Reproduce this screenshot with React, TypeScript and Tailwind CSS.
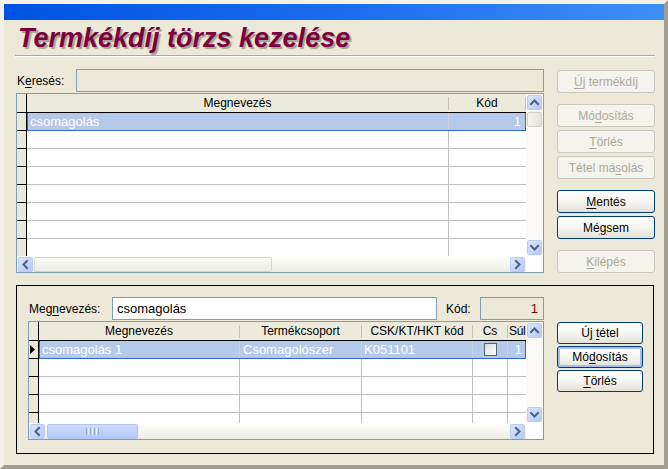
import React from 'react';

type Dir = 'up' | 'down' | 'left' | 'right';

function Chev({ dir }: { dir: Dir }) {
  const pts =
    dir === 'up'
      ? '3,8 6.5,4.5 10,8'
      : dir === 'down'
      ? '3,5 6.5,8.5 10,5'
      : dir === 'left'
      ? '8,3 4.5,6.5 8,10'
      : '5,3 8.5,6.5 5,10';
  return (
    <svg width="13" height="13" viewBox="0 0 13 13">
      <polyline points={pts} fill="none" stroke="#4D6185" strokeWidth="2" strokeLinecap="square" />
    </svg>
  );
}

function SB({ dir }: { dir: Dir }) {
  return (
    <div className="w-[15px] h-[15px] shrink-0 rounded-[2px] border border-[#BACCF3] bg-gradient-to-br from-[#DCE6FD] to-[#B4C8F6] flex items-center justify-center">
      <Chev dir={dir} />
    </div>
  );
}

function U({ children }: { children: React.ReactNode }) {
  return <span className="underline underline-offset-[2px] decoration-1">{children}</span>;
}

function Btn({
  children,
  disabled,
  focused,
  small,
}: {
  children: React.ReactNode;
  disabled?: boolean;
  focused?: boolean;
  small?: boolean;
}) {
  return (
    <div
      className={[
        small ? 'w-[86px] h-[22px]' : 'w-[98px] h-[23px]',
        'shrink-0 rounded-[3px] border flex items-center justify-center text-[12px] leading-none',
        disabled
          ? 'border-[#CAC8BB] bg-[#F4F3EE] text-[#ACA899]'
          : 'border-[#003C74] bg-gradient-to-b from-white via-[#F6F5F1] to-[#E3E1D8] text-black',
        focused ? 'shadow-[inset_0_0_0_2px_#A4BFEE]' : '',
      ].join(' ')}
    >
      <span>{children}</span>
    </div>
  );
}

function HSep() {
  return <span className="w-[1px] h-[13px] bg-[#C5C2B2] shrink-0" />;
}

function Grid1() {
  const rows = [0, 1, 2, 3, 4, 5, 6, 7];
  return (
    <div className="w-[528px] h-[180px] border border-[#7F9DB9] bg-white flex">
      <div className="w-[509px] flex flex-col">
        <div className="h-[18px] flex bg-[#EBEADB] text-[12px]">
          <div className="w-[10px] border-r border-black" />
          <div className="w-[422px] flex items-center">
            <span className="flex-1 text-center">Megnevezés</span>
            <HSep />
          </div>
          <div className="w-[77px] flex items-center">
            <span className="flex-1 text-center">Kód</span>
            <HSep />
          </div>
        </div>
        <div className="h-[1px] bg-black" />
        <div className="h-[143px] overflow-hidden flex flex-col">
          {rows.map((i) =>
            i === 0 ? (
              <div key={i} className="h-[18px] shrink-0 flex">
                <div className="w-[10px] bg-[#ECE9D8] border-r border-b border-black" />
                <div className="w-[499px] flex bg-[#B5C9EB] border-l border-r border-b border-[#316AC5] text-white text-[13px]">
                  <div className="w-[421px] border-r border-[#C8D2E4] flex items-center pl-[2px]">csomagolás</div>
                  <div className="w-[76px] flex items-center justify-end pr-[4px]">1</div>
                </div>
              </div>
            ) : (
              <div key={i} className="h-[18px] shrink-0 flex">
                <div className="w-[10px] bg-[#ECE9D8] border-r border-b border-black" />
                <div className="w-[422px] border-r border-b border-[#C0C0C0]" />
                <div className="w-[77px] border-b border-[#C0C0C0]" />
              </div>
            )
          )}
        </div>
        <div className="h-[16px] flex items-center bg-gradient-to-b from-[#FEFEFB] to-[#EEEDE5]">
          <div className="ml-[1px]">
            <SB dir="left" />
          </div>
          <div className="ml-[1px] w-[238px] h-[15px] rounded-[2px] border border-[#D8D6CA] bg-gradient-to-b from-[#FBFBF8] to-[#ECEBE3]" />
          <div className="flex-1" />
          <div className="mr-[1px]">
            <SB dir="right" />
          </div>
        </div>
      </div>
      <div className="w-[17px] flex flex-col">
        <div className="h-[162px] bg-[#FAF9F5] flex flex-col items-center">
          <div className="mt-[1px]">
            <SB dir="up" />
          </div>
          <div className="mt-[2px] w-[15px] h-[15px] rounded-[2px] border border-[#D2D0C4] bg-gradient-to-r from-[#F4F3EE] to-[#E6E5DC]" />
          <div className="flex-1" />
          <div className="mb-[1px]">
            <SB dir="down" />
          </div>
        </div>
        <div className="h-[16px] bg-white" />
      </div>
    </div>
  );
}

function Check() {
  return (
    <div className="w-[13px] h-[13px] border border-[#5A6370] bg-gradient-to-br from-[#DCDCD6] to-white" />
  );
}

function Grid2() {
  const rows = [0, 1, 2, 3, 4];
  return (
    <div className="w-[516px] h-[119px] border border-[#7F9DB9] bg-white flex">
      <div className="w-[497px] flex flex-col">
        <div className="h-[18px] flex bg-[#EBEADB] text-[12px]">
          <div className="w-[10px] border-r border-black" />
          <div className="w-[201px] flex items-center">
            <span className="flex-1 text-center">Megnevezés</span>
            <HSep />
          </div>
          <div className="w-[122px] flex items-center">
            <span className="flex-1 text-center">Termékcsoport</span>
            <HSep />
          </div>
          <div className="w-[111px] flex items-center">
            <span className="flex-1 text-center">CSK/KT/HKT kód</span>
            <HSep />
          </div>
          <div className="w-[35px] flex items-center">
            <span className="flex-1 text-center">Cs</span>
            <HSep />
          </div>
          <div className="w-[18px] flex items-center whitespace-nowrap">
            <span className="pl-[1px] tracking-[-0.3px]">Súl</span>
          </div>
        </div>
        <div className="h-[1px] bg-black" />
        <div className="h-[82px] overflow-hidden flex flex-col">
          {rows.map((i) =>
            i === 0 ? (
              <div key={i} className="h-[18px] shrink-0 flex">
                <div className="w-[10px] bg-[#ECE9D8] border-r border-b border-black flex items-center">
                  <svg width="6" height="9" viewBox="0 0 6 9" className="ml-[1px]">
                    <polygon points="0,0 5,4.5 0,9" fill="#000" />
                  </svg>
                </div>
                <div className="w-[487px] flex bg-[#B5C9EB] border-l border-r border-b border-[#316AC5] text-white text-[13px] whitespace-nowrap">
                  <div className="w-[200px] border-r border-[#C8D2E4] flex items-center pl-[2px]">csomagolás 1</div>
                  <div className="w-[122px] border-r border-[#C8D2E4] flex items-center pl-[3px] overflow-hidden">Csomagolószer</div>
                  <div className="w-[111px] border-r border-[#C8D2E4] flex items-center pl-[2px]">K051101</div>
                  <div className="w-[35px] border-r border-[#C8D2E4] flex items-center justify-center">
                    <Check />
                  </div>
                  <div className="w-[17px] flex items-center justify-end pr-[3px]">1</div>
                </div>
              </div>
            ) : (
              <div key={i} className="h-[18px] shrink-0 flex">
                <div className="w-[10px] bg-[#ECE9D8] border-r border-b border-black" />
                <div className="w-[201px] border-r border-b border-[#C0C0C0]" />
                <div className="w-[122px] border-r border-b border-[#C0C0C0]" />
                <div className="w-[111px] border-r border-b border-[#C0C0C0]" />
                <div className="w-[35px] border-r border-b border-[#C0C0C0]" />
                <div className="w-[18px] border-b border-[#C0C0C0]" />
              </div>
            )
          )}
        </div>
        <div className="h-[16px] flex items-center bg-gradient-to-b from-[#FEFEFB] to-[#EEEDE5]">
          <div className="ml-[1px]">
            <SB dir="left" />
          </div>
          <div className="ml-[2px] w-[91px] h-[15px] rounded-[2px] border border-[#B0C4F4] bg-gradient-to-b from-[#CDDBFD] to-[#B4C8F7] flex items-center justify-center gap-[1px]">
            <span className="w-[1px] h-[7px] bg-[#8EA6DA]" />
            <span className="w-[1px] h-[7px] bg-[#EEF3FF]" />
            <span className="w-[1px] h-[7px] bg-[#8EA6DA]" />
            <span className="w-[1px] h-[7px] bg-[#EEF3FF]" />
            <span className="w-[1px] h-[7px] bg-[#8EA6DA]" />
            <span className="w-[1px] h-[7px] bg-[#EEF3FF]" />
            <span className="w-[1px] h-[7px] bg-[#8EA6DA]" />
          </div>
          <div className="flex-1" />
          <div className="mr-[1px]">
            <SB dir="right" />
          </div>
        </div>
      </div>
      <div className="w-[17px] flex flex-col">
        <div className="h-[101px] bg-[#FAF9F5] flex flex-col items-center">
          <div className="mt-[1px]">
            <SB dir="up" />
          </div>
          <div className="flex-1" />
          <div className="mb-[1px]">
            <SB dir="down" />
          </div>
        </div>
        <div className="h-[16px] bg-white" />
      </div>
    </div>
  );
}

export default function App() {
  return (
    <div className="w-[668px] h-[469px] bg-[#ECE9D8] flex flex-col border-[4px] border-t-[#F3F1E8] border-l-[#F3F1E8] border-r-[#A19E90] border-b-[#A19E90] overflow-hidden font-['Liberation_Sans',Arial,sans-serif] text-[12px] text-black">
      <div className="h-[16px] shrink-0 bg-gradient-to-r from-[#0053E2] via-[#1A6BEE] to-[#3D8FF7]" />

      <div className="h-[30px] mt-[3px] pl-[14px] flex items-center shrink-0">
        <span className="text-[27px] leading-[30px] font-bold italic text-[#7B0040] [text-shadow:2px_2px_1px_#A5A398] whitespace-nowrap">
          Termkékdíj törzs kezelése
        </span>
      </div>
      <div className="mt-[2px] ml-[11px] w-[640px] h-[2px] border-t border-b border-t-[#ACA899] border-b-white shrink-0" />

      <div className="flex mt-[12px] ml-[12px] shrink-0">
        <div className="w-[528px] flex flex-col">
          <div className="h-[23px] flex">
            <div className="w-[60px] pl-[1px] flex items-center text-[12px]">
              <span>
                K<U>e</U>resés:
              </span>
            </div>
            <div className="w-[468px] h-full border border-[#7F9DB9] bg-[#ECE9D8]" />
          </div>
          <div className="mt-[1px]">
            <Grid1 />
          </div>
        </div>
        <div className="ml-[13px] mt-[1px] flex flex-col">
          <Btn disabled>
            <U>Ú</U>j termékdíj
          </Btn>
          <div className="mt-[11px]">
            <Btn disabled>
              Mó<U>d</U>osítás
            </Btn>
          </div>
          <div className="mt-[3px]">
            <Btn disabled>
              <U>T</U>örlés
            </Btn>
          </div>
          <div className="mt-[3px]">
            <Btn disabled>
              Tétel má<U>s</U>olás
            </Btn>
          </div>
          <div className="mt-[11px]">
            <Btn>
              <U>M</U>entés
            </Btn>
          </div>
          <div className="mt-[3px]">
            <Btn>
              Mé<U>g</U>sem
            </Btn>
          </div>
          <div className="mt-[11px]">
            <Btn disabled>
              <U>K</U>ilépés
            </Btn>
          </div>
        </div>
      </div>

      <div className="mt-[12px] ml-[12px] w-[638px] h-[169px] border border-black flex shrink-0">
        <div className="ml-[11px] w-[516px] flex flex-col">
          <div className="mt-[11px] h-[23px] flex">
            <div className="ml-[1px] w-[83px] flex items-center text-[12px]">
              <span>
                Meg<U>n</U>evezés:
              </span>
            </div>
            <div className="w-[325px] h-full border border-[#7F9DB9] bg-white flex items-center pl-[4px] text-[13px]">
              csomagolás
            </div>
            <div className="ml-[9px] w-[34px] flex items-center text-[12px]">Kód:</div>
            <div className="w-[64px] h-full border border-[#7F9DB9] bg-[#ECE9D8] flex items-center justify-end pr-[5px] text-[13px] text-[#800000]">
              1
            </div>
          </div>
          <div className="mt-[1px]">
            <Grid2 />
          </div>
        </div>
        <div className="ml-[13px] mt-[36px] flex flex-col gap-[2px]">
          <Btn small>
            Új <U>t</U>étel
          </Btn>
          <Btn small focused>
            Mó<U>d</U>osítás
          </Btn>
          <Btn small>
            <U>T</U>örlés
          </Btn>
        </div>
      </div>
    </div>
  );
}
